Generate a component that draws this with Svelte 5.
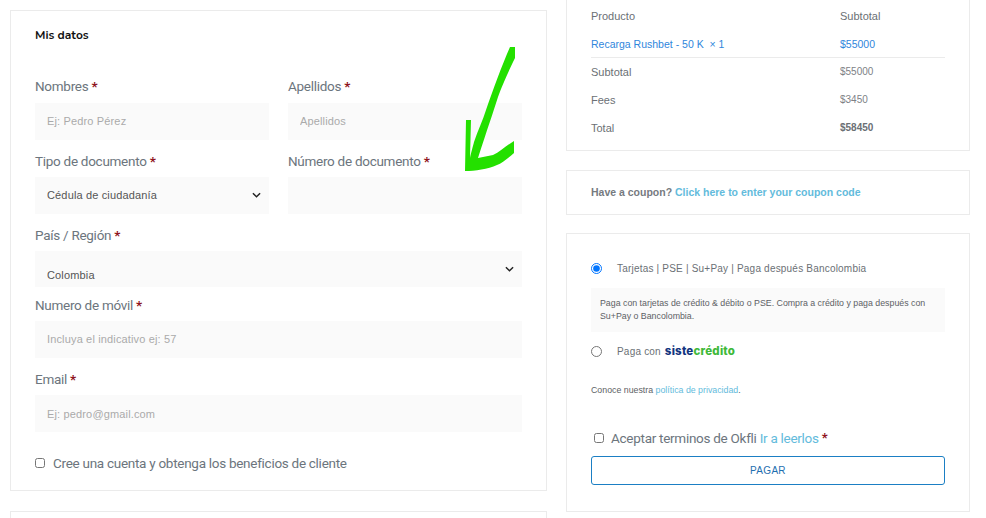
<script lang="ts">
  const rows = [
    { label: 'Subtotal', value: '$55000' },
    { label: 'Fees', value: '$3450' },
    { label: 'Total', value: '$58450', strong: true },
  ];
</script>

<div class="page">
  <div class="left">
    <section class="card datos">
      <h2>Mis datos</h2>
      <div class="grid">
        <div class="field top">
          <label for="nombres">Nombres <b>*</b></label>
          <input id="nombres" placeholder="Ej: Pedro Pérez" />
        </div>
        <div class="field top">
          <label for="apellidos">Apellidos <b>*</b></label>
          <input id="apellidos" placeholder="Apellidos" />
        </div>
        <div class="field">
          <label for="tipo">Tipo de documento <b>*</b></label>
          <div class="select">
            <select id="tipo"><option>Cédula de ciudadanía</option></select>
            <svg viewBox="0 0 10 6" width="9" height="6"><path d="M1 1l4 4 4-4" /></svg>
          </div>
        </div>
        <div class="field">
          <label for="numero">Número de documento <b>*</b></label>
          <input id="numero" />
        </div>
        <div class="field wide tight">
          <label for="pais">País / Región <b>*</b></label>
          <div class="select low">
            <select id="pais"><option>Colombia</option></select>
            <svg viewBox="0 0 10 6" width="9" height="6"><path d="M1 1l4 4 4-4" /></svg>
          </div>
        </div>
        <div class="field wide">
          <label for="movil">Numero de móvil <b>*</b></label>
          <input id="movil" placeholder="Incluya el indicativo ej: 57" />
        </div>
        <div class="field wide email">
          <label for="email">Email <b>*</b></label>
          <input id="email" placeholder="Ej: pedro@gmail.com" />
        </div>
      </div>
      <label class="check">
        <input type="checkbox" />
        <span>Cree una cuenta y obtenga los beneficios de cliente</span>
      </label>
    </section>
    <section class="card stub"></section>
  </div>

  <div class="right">
    <section class="card resumen">
      <div class="row head"><span>Producto</span><span>Subtotal</span></div>
      <div class="row item"><span>Recarga Rushbet - 50 K &nbsp;× 1</span><span>$55000</span></div>
      {#each rows as r}
        <div class="row">
          <span>{r.label}</span>
          <span class="val" class:strong={r.strong}>{r.value}</span>
        </div>
      {/each}
    </section>

    <section class="card coupon">
      Have a coupon? <a href="#coupon">Click here to enter your coupon code</a>
    </section>

    <section class="card pago">
      <label class="metodo first">
        <input type="radio" name="pago" checked />
        <span>Tarjetas | PSE | Su+Pay | Paga después Bancolombia</span>
      </label>
      <p class="info">
        Paga con tarjetas de crédito &amp; débito o PSE. Compra a crédito y paga después con Su+Pay o Bancolombia.
      </p>
      <label class="metodo">
        <input type="radio" name="pago" />
        <span>Paga con <strong class="logo">siste<em>crédito</em></strong></span>
      </label>
      <p class="privacidad">Conoce nuestra <a href="#politica">política de privacidad</a>.</p>
      <label class="check terminos">
        <input type="checkbox" />
        <span>Aceptar terminos de Okfli <a href="#terminos">Ir a leerlos</a> <b>*</b></span>
      </label>
      <button>PAGAR</button>
    </section>
  </div>

  <svg class="arrow" viewBox="0 0 60 135" width="60" height="135">
    <path d="M50 7 L55 7 L55 18 C49 30 42 46 38 57 C33 73 27 90 18 118 L33 115 C40 112 47 105 54 101 L54 113 C47 119 42 123 37 125 C28 129 15 131 5 131 L6 80 L11 80 L10 118 C11 113 13 106 14 102 C18 90 23 80 26 70 C33 50 42 25 50 7 Z" />
  </svg>
</div>

<style>
  :global(body) {
    margin: 0;
    background: #fff;
  }

  .page {
    position: relative;
    width: 986px;
    height: 518px;
    overflow: hidden;
    display: grid;
    grid-template-columns: 537px 404px;
    column-gap: 19px;
    padding-left: 10px;
    box-sizing: border-box;
    font-family: "Liberation Sans", Arial, sans-serif;
    color: #6b7075;
  }

  .card {
    border: 1px solid #ebebeb;
    box-sizing: border-box;
    background: #fff;
  }

  .left {
    padding-top: 10px;
    display: flex;
    flex-direction: column;
    gap: 20px;
  }

  .datos {
    height: 481px;
    padding: 0 24px;
  }

  .stub {
    height: 40px;
  }

  h2 {
    margin: 0;
    padding-top: 17px;
    height: 58px;
    box-sizing: border-box;
    font: 700 12px/14px "Nunito", "Noto Sans", sans-serif;
    color: #111;
  }

  .grid {
    display: grid;
    grid-template-columns: 234px 234px;
    column-gap: 19px;
  }

  .wide {
    grid-column: 1 / -1;
  }

  .field {
    display: flex;
    flex-direction: column;
    height: 74px;
  }

  .field.tight {
    height: 70px;
  }

  .field label {
    height: 34px;
    line-height: 37px;
    font-family: Roboto, sans-serif;
    font-size: 13.5px;
    letter-spacing: -0.28px;
    color: #6c757d;
  }

  .field.top label {
    line-height: 35px;
  }

  .field label b {
    color: #8f1420;
    font-weight: 700;
  }

  .field input,
  .select select {
    width: 100%;
    height: 37px;
    border: 0;
    outline: 0;
    padding: 0 12px 2px;
    box-sizing: border-box;
    background: #fafafa;
    font: 11px "Liberation Sans", Arial, sans-serif;
    letter-spacing: 0.15px;
    color: #555;
  }

  .field input::placeholder {
    color: #aaa;
    opacity: 1;
  }

  .field.email input {
    padding-bottom: 0;
  }

  .select {
    position: relative;
    height: 37px;
  }

  .select select {
    appearance: none;
    display: block;
  }

  .select.low select {
    height: 36px;
    padding-top: 11px;
    padding-bottom: 0;
  }

  .select svg {
    position: absolute;
    right: 8px;
    top: 15px;
    fill: none;
    stroke: #222;
    stroke-width: 1.6;
  }

  .check {
    display: flex;
    align-items: center;
    gap: 5px;
    font-family: Roboto, sans-serif;
    font-size: 13.5px;
    letter-spacing: -0.28px;
    color: #6c757d;
  }

  .check input {
    margin: 0 3px 0 0;
    width: 10px;
    height: 10px;
  }

  .datos .check {
    margin-top: 20px;
  }

  .right {
    display: flex;
    flex-direction: column;
  }

  .resumen {
    height: 151px;
    border-top: 0;
    padding: 2px 24px 0;
    font-size: 11px;
  }

  .row {
    display: grid;
    grid-template-columns: 249px 1fr;
    height: 28px;
    align-items: center;
  }

  .row.item {
    color: #2f86dc;
    border-bottom: 1px solid #ebebeb;
    height: 27px;
    font-size: 10.5px;
  }

  .val {
    font-size: 10px;
    padding-bottom: 1px;
    color: #7d8186;
  }

  .strong {
    font-weight: 700;
    color: #6b7075;
  }

  .coupon {
    margin-top: 19px;
    height: 45px;
    padding: 0 24px;
    line-height: 43px;
    font-size: 10.5px;
    font-weight: 700;
    color: #767a7f;
  }

  a {
    color: #63bbdc;
    text-decoration: none;
  }

  .pago {
    margin-top: 18px;
    height: 279px;
    padding: 0 24px;
  }

  .metodo {
    display: flex;
    align-items: center;
    font-size: 10px;
    letter-spacing: 0.2px;
    height: 20px;
  }

  .metodo.first {
    margin-top: 24px;
  }

  .metodo input {
    margin: 0 15px 0 0;
    width: 11px;
    height: 11px;
  }

  .info {
    margin: 10px 0 0;
    height: 44px;
    padding: 9px 9px 0;
    box-sizing: border-box;
    background: #fafafa;
    font-size: 8.8px;
    line-height: 13px;
    color: #5d6165;
  }

  .info + .metodo {
    margin-top: 9px;
  }

  .logo {
    margin-left: 1px;
    font: 800 11.5px "Inter", "Noto Sans", sans-serif;
    color: #12357f;
  }

  .logo em {
    font-style: normal;
    color: #3fb93a;
  }

  .privacidad {
    margin: 23px 0 0;
    font-size: 8.8px;
    line-height: 12px;
    color: #5d6165;
  }

  .terminos {
    margin-top: 34px;
    padding-left: 3px;
    gap: 4px;
  }

  .terminos span {
    line-height: 16px;
  }

  .terminos b {
    color: #8f1420;
    font-size: 13px;
    vertical-align: 1px;
  }

  button {
    display: block;
    width: 354px;
    height: 29px;
    margin-top: 10px;
    border: 1px solid #1b7fc4;
    border-radius: 3px;
    background: #fff;
    color: #1f6fb0;
    font: 10px "Liberation Sans", Arial, sans-serif;
    letter-spacing: 0.3px;
  }

  .arrow {
    position: absolute;
    left: 460px;
    top: 40px;
    fill: #24e000;
  }
</style>
